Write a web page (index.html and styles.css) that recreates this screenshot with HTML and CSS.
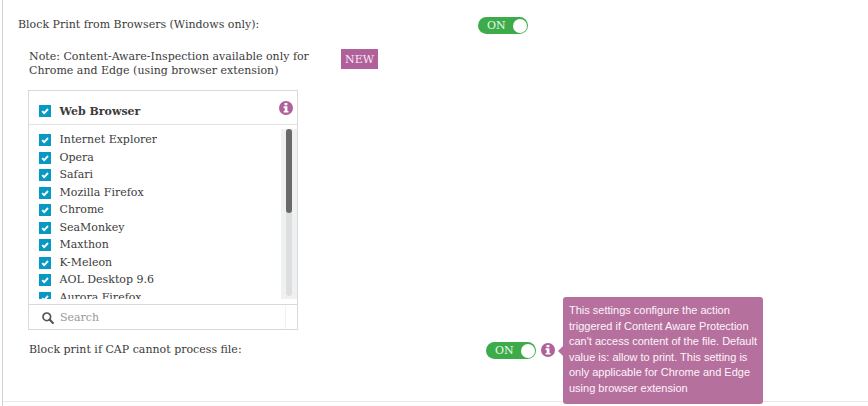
FILE: index.html
```
<!DOCTYPE html>
<html lang="en">
<head>
<meta charset="utf-8">
<title>Block Print from Browsers</title>
<link rel="stylesheet" href="styles.css">
</head>
<body>
<svg class="defs" aria-hidden="true">
  <symbol id="info" viewBox="0 0 14 14"><circle cx="7" cy="7" r="7" fill="#b0609a"/><path d="M5.5 2h2.9v2.3H5.5zM4.6 5.2h3.8v4.7h1.1v1.7H4.6V9.9h1.1V6.9H4.6z" fill="#fff"/></symbol>
  <symbol id="check" viewBox="0 0 12 12"><path d="M3.2 6.1 5.2 8.1 9 4" fill="none" stroke="#fff" stroke-width="1.9"/></symbol>
</svg>
<main class="settings">
  <div class="row row-top">
    <span class="title">Block Print from Browsers (Windows only):</span>
    <span class="toggle">ON<i class="knob"></i></span>
  </div>
  <div class="row row-note">
    <p class="note">Note: Content-Aware-Inspection available only for<br>Chrome and Edge (using browser extension)</p>
    <span class="badge">NEW</span>
  </div>
  <section class="browsers">
    <header class="head">
      <svg class="box"><use href="#check"/></svg><b class="heading">Web Browser</b>
      <svg class="info"><use href="#info"/></svg>
    </header>
    <div class="body">
      <ul class="list">
        <li><svg class="box"><use href="#check"/></svg><span>Internet Explorer</span></li>
        <li><svg class="box"><use href="#check"/></svg><span>Opera</span></li>
        <li><svg class="box"><use href="#check"/></svg><span>Safari</span></li>
        <li><svg class="box"><use href="#check"/></svg><span>Mozilla Firefox</span></li>
        <li><svg class="box"><use href="#check"/></svg><span>Chrome</span></li>
        <li><svg class="box"><use href="#check"/></svg><span>SeaMonkey</span></li>
        <li><svg class="box"><use href="#check"/></svg><span>Maxthon</span></li>
        <li><svg class="box"><use href="#check"/></svg><span>K-Meleon</span></li>
        <li><svg class="box"><use href="#check"/></svg><span>AOL Desktop 9.6</span></li>
        <li><svg class="box"><use href="#check"/></svg><span>Aurora Firefox</span></li>
      </ul>
      <div class="scroll"><div class="track"><div class="thumb"></div></div></div>
    </div>
    <div class="search">
      <svg class="glass" viewBox="0 0 12 12"><circle cx="4.8" cy="4.8" r="3.8" fill="none" stroke="#555" stroke-width="1.7"/><path d="m7.6 7.6 3.3 3.3" stroke="#555" stroke-width="2.1" stroke-linecap="round"/></svg>
      <span class="field">Search</span>
    </div>
  </section>
  <div class="row row-cap">
    <span class="cap">Block print if CAP cannot process file:</span>
    <span class="toggle">ON<i class="knob"></i></span>
    <span class="hint"><svg class="info"><use href="#info"/></svg>
      <span class="tip">This settings configure the action<br>triggered if Content Aware Protection<br>can't access content of the file. Default<br>value is: allow to print. This setting is<br>only applicable for Chrome and Edge<br>using browser extension</span>
    </span>
  </div>
</main>
</body>
</html>
```
FILE: styles.css
```
* { box-sizing: border-box; }
body { margin: 0; height: 406px; overflow: hidden; background: #fff; color: #3b3b3b; font: 11px/14px "DejaVu Serif", serif; }
svg { display: block; flex: none; }
.defs { display: none; }
.settings { margin-left: 2px; height: 406px; border-left: 1px solid #d2d2d2; }
.row { display: flex; }
.row-top { height: 50px; padding: 17px 0 0 15px; }
.title { width: 460px; padding-top: 1px; }
.toggle { display: flex; align-items: center; justify-content: space-between; width: 50px; height: 17px; border-radius: 9px; background: #3dab49; color: #e9f8ea; padding: 0 1px 0 9px; font-size: 11px; line-height: 17px; }
.knob { width: 14px; height: 14px; border-radius: 50%; background: #fff; }
.row-note { height: 40px; padding-left: 26px; }
.note { margin: 0; width: 312px; }
.badge { margin-top: -1px; width: 37px; height: 20px; background: #b0609a; color: #f8e9f4; text-align: center; line-height: 21px; }
.browsers { margin-left: 25px; width: 270px; height: 240px; border: 1px solid #d9d9d9; }
.head { display: flex; height: 34px; padding: 14px 4px 0 10px; border-bottom: 1px solid #e2e2e2; }
.box { width: 12px; height: 12px; background: #0799c4; margin-right: 8.5px; }
.heading { flex: 1; line-height: 13px; }
.info { width: 14px; height: 14px; }
.head .info { margin-top: -4px; }
.body { display: flex; justify-content: space-between; height: 174px; padding-top: 4px; }
.list { margin: 0; padding: 2.4px 0 0 10px; list-style: none; height: 170px; overflow: hidden; }
.list li { display: flex; align-items: center; height: 17.5px; }
.scroll { width: 16px; height: 170px; background: #eff0f1; padding-left: 5px; }
.track { width: 6px; height: 167px; border-radius: 3px; background: #dcdee0; }
.thumb { width: 6px; height: 84px; border-radius: 3px; background: #696969; }
.search { display: flex; align-items: center; height: 26px; margin-top: 5px; border-top: 1px solid #d9d9d9; padding-left: 13px; }
.glass { width: 12px; height: 12px; margin-right: 5px; }
.field { width: 227px; height: 23px; line-height: 23px; padding-left: 1px; color: #999; border-right: 1px solid #f1f1f1; }
.row-cap { height: 72px; padding: 12px 0 0 26px; border-bottom: 1px solid #e8e8e8; }
.cap { width: 457px; padding-top: 1px; }
.hint { position: relative; margin: 1px 0 0 5px; height: 14px; }
.tip { position: absolute; left: 22px; top: -46px; width: 200px; height: 107px; padding: 6px; border-radius: 3px; background: #b6709e; color: #fdf4fa; font: 11px/15.6px "Liberation Sans", sans-serif; white-space: nowrap; }
.tip::before { content: ""; position: absolute; left: -5px; top: 49px; border: 5px solid transparent; border-left: 0; border-right-color: #b6709e; }
```
